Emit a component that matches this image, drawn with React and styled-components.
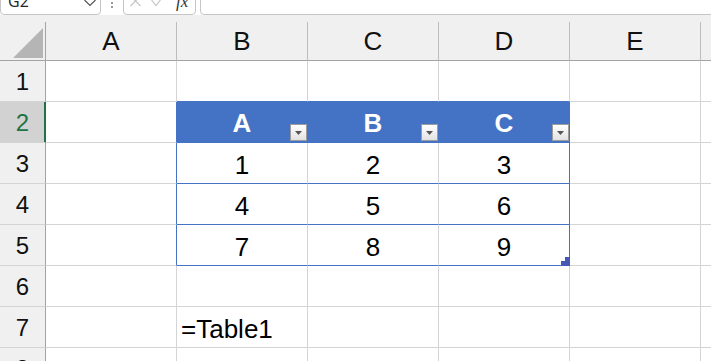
import React from 'react';
import styled, { createGlobalStyle } from 'styled-components';

const GRID = '#d4d4d4';
const BLUE = '#4472c4';
const HEAD_BG = '#f0f0f0';
const HEAD_LINE = '#a3a3a3';
const HEAD_SEP = '#bdbdbd';
const GREEN = '#217346';

const GlobalStyle = createGlobalStyle`
  html, body { margin: 0; padding: 0; background: #fff; overflow: hidden; }
  body { font-family: "Liberation Sans", Arial, sans-serif; }
`;

const Window = styled.div`
  width: 711px;
  height: 361px;
  overflow: hidden;
  display: flex;
  flex-direction: column;
  background: #fff;
`;

const FormulaBar = styled.div`
  height: 15px;
  flex: none;
  display: flex;
  align-items: flex-end;
  overflow: hidden;
  background: #fff;
`;

const Field = styled.div`
  flex: ${(p) => (p.$grow ? '1 0 auto' : 'none')};
  width: ${(p) => (p.$width ? `${p.$width}px` : 'auto')};
  margin-left: ${(p) => p.$ml || 0}px;
  margin-right: ${(p) => p.$mr || 0}px;
  height: 30px;
  box-sizing: border-box;
  border: 1px solid #c6c6c6;
  border-radius: 4px;
  background: #fff;
  display: flex;
  align-items: flex-end;
  padding: 0 4px 4px ${(p) => p.$pl || 7}px;
  gap: 10px;
`;

const NameText = styled.span`
  font-family: "Open Sans", "Liberation Sans", sans-serif;
  font-size: 16px;
  line-height: 17px;
  color: #222;
  flex: 1;
`;

const Grip = styled.div`
  width: 22px;
  flex: none;
  align-self: stretch;
  display: flex;
  flex-direction: column;
  align-items: center;
  padding-top: 2px;
  gap: 2px;
  box-sizing: border-box;
`;

const Dot = styled.span`
  width: 2px;
  height: 2px;
  background: #7a7a7a;
  border-radius: 1px;
`;

const FxText = styled.span`
  font-family: "Liberation Serif", serif;
  font-style: italic;
  font-size: 17px;
  line-height: 17px;
  color: #333;
  margin-left: 2px;
`;

const HeaderGap = styled.div`
  height: 7px;
  flex: none;
  background: ${HEAD_BG};
`;

const Sheet = styled.div`
  display: grid;
  grid-template-columns: 46px repeat(6, 131px);
  grid-template-rows: 39px repeat(8, 41px);
  flex: none;
`;

const Corner = styled.div`
  background: ${HEAD_BG};
  border-right: 1px solid ${HEAD_LINE};
  border-bottom: 1px solid ${HEAD_LINE};
  display: flex;
  justify-content: flex-end;
  align-items: flex-end;
  padding: 0 2px 2px 0;
`;

const ColHeader = styled.div`
  background: ${HEAD_BG};
  border-right: 1px solid ${HEAD_SEP};
  border-bottom: 1px solid ${HEAD_LINE};
  display: flex;
  align-items: center;
  justify-content: center;
  font-size: 26px;
  line-height: 29px;
  color: #111;
`;

const RowHeader = styled.div`
  background: ${(p) => (p.$selected ? '#d2d2d2' : HEAD_BG)};
  color: ${(p) => (p.$selected ? GREEN : '#111')};
  border-right: 1px solid ${(p) => (p.$selected ? GREEN : HEAD_LINE)};
  box-shadow: ${(p) => (p.$selected ? `inset -1px 0 0 ${GREEN}` : 'none')};
  border-bottom: 1px solid ${GRID};
  display: flex;
  align-items: center;
  justify-content: center;
  font-size: 24px;
  line-height: 27px;
`;

const Cell = styled.div`
  position: relative;
  background: ${(p) => p.$bg || '#fff'};
  border-right: 1px solid ${(p) => p.$right || GRID};
  border-bottom: 1px solid ${(p) => p.$bottom || GRID};
  display: flex;
  align-items: flex-end;
  justify-content: ${(p) => p.$justify || 'center'};
  padding: 0 4px ${(p) => (p.$head ? 4 : 3)}px;
  font-size: 26px;
  line-height: 29px;
  font-weight: ${(p) => (p.$head ? 700 : 400)};
  color: ${(p) => (p.$head ? '#fff' : '#000')};
  white-space: nowrap;
`;

const FilterButton = styled.div`
  position: absolute;
  right: 0;
  bottom: 1px;
  width: 17px;
  height: 17px;
  box-sizing: border-box;
  border: 1px solid #9c9c9c;
  background: linear-gradient(#ffffff, #e2e2e2);
  display: flex;
  align-items: center;
  justify-content: center;
  padding-top: 1px;
`;

const ResizeHandle = styled.svg`
  position: absolute;
  right: -1px;
  bottom: -1px;
`;

const COLS = ['A', 'B', 'C', 'D', 'E', 'F'];
const ROWS = [1, 2, 3, 4, 5, 6, 7, 8];
const TABLE = {
  2: ['A', 'B', 'C'],
  3: ['1', '2', '3'],
  4: ['4', '5', '6'],
  5: ['7', '8', '9'],
};

function Chevron() {
  return (
    <svg width="12" height="7" viewBox="0 0 12 7" style={{ marginBottom: 3 }}>
      <polyline points="0.5,0 6,5.5 11.5,0" fill="none" stroke="#555" strokeWidth="1.2" />
    </svg>
  );
}

function CloseIcon() {
  return (
    <svg width="11" height="10" viewBox="0 0 11 10" style={{ marginBottom: 2 }}>
      <path d="M0.5 -2 L10.5 8 M10.5 -2 L0.5 8" stroke="#c4c4c4" strokeWidth="1.1" fill="none" />
    </svg>
  );
}

function CheckIcon() {
  return (
    <svg width="13" height="10" viewBox="0 0 13 10" style={{ marginBottom: 2 }}>
      <polyline points="0.5,2 5,7.5 12.5,-2" stroke="#c4c4c4" strokeWidth="1.1" fill="none" />
    </svg>
  );
}

function cellProps(r, c) {
  // c: 1 = A, 2 = B ... (0 is row header)
  const inTableCol = c >= 2 && c <= 4;
  const p = {};
  if (r === 2 && inTableCol) {
    p.$bg = BLUE;
    p.$right = BLUE;
    p.$bottom = BLUE;
    p.$head = true;
  } else if (r >= 3 && r <= 5 && inTableCol) {
    p.$bottom = BLUE;
    if (c === 4) p.$right = BLUE;
  }
  if (r === 1 && inTableCol) p.$bottom = BLUE;
  if (c === 1 && r >= 2 && r <= 5) p.$right = BLUE;
  return p;
}

export default function App() {
  return (
    <>
      <GlobalStyle />
      <Window>
        <FormulaBar>
          <Field $width={101}>
            <NameText>G2</NameText>
            <Chevron />
          </Field>
          <Grip>
            <Dot />
            <Dot />
          </Grip>
          <Field $width={73} $pl={6}>
            <CloseIcon />
            <CheckIcon />
            <FxText>fx</FxText>
          </Field>
          <Field $grow $ml={4} $mr={-10} />
        </FormulaBar>
        <HeaderGap />
        <Sheet>
          <Corner>
            <svg width="30" height="30" viewBox="0 0 30 30">
              <polygon points="30,0 30,30 0,30" fill="#b5b5b5" />
            </svg>
          </Corner>
          {COLS.map((col) => (
            <ColHeader key={col}>{col}</ColHeader>
          ))}
          {ROWS.map((r) => (
            <React.Fragment key={r}>
              <RowHeader $selected={r === 2}>{r}</RowHeader>
              {COLS.map((col, i) => {
                const c = i + 1;
                const props = cellProps(r, c);
                const tableVals = TABLE[r];
                const inTable = tableVals && c >= 2 && c <= 4;
                let content = null;
                if (inTable) content = tableVals[c - 2];
                if (r === 7 && c === 2) content = '=Table1';
                return (
                  <Cell key={col} {...props} $justify={r === 7 && c === 2 ? 'flex-start' : 'center'}>
                    {content}
                    {r === 2 && inTable && (
                      <FilterButton>
                        <svg width="7" height="4" viewBox="0 0 7 4">
                          <polygon points="0,0 7,0 3.5,4" fill="#555" />
                        </svg>
                      </FilterButton>
                    )}
                    {r === 5 && c === 4 && (
                      <ResizeHandle width="9" height="9" viewBox="0 0 9 9">
                        <rect x="4" y="0" width="5" height="4" fill="#4558b5" />
                        <rect x="0" y="4" width="9" height="5" fill="#4558b5" />
                      </ResizeHandle>
                    )}
                  </Cell>
                );
              })}
            </React.Fragment>
          ))}
        </Sheet>
      </Window>
    </>
  );
}
